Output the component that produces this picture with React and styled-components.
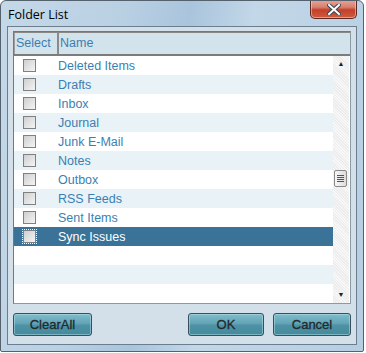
import React, { useState } from "react";
import styled, { createGlobalStyle } from "styled-components";

const folders = [
    "Deleted Items",
    "Drafts",
    "Inbox",
    "Journal",
    "Junk E-Mail",
    "Notes",
    "Outbox",
    "RSS Feeds",
    "Sent Items",
    "Sync Issues",
];

const GlobalStyle = createGlobalStyle`
    body {
        margin: 0;
        background: #fff;
        font-family: "Liberation Sans", Arial, sans-serif;
    }
`;

export default function App() {
    const [selected] = useState(9);
    const rows = [...folders, "", "", ""];
    return (
        <>
            <GlobalStyle />
            <Window>
                <TitleBar>
                    <Title>Folder List</Title>
                    <CloseButton>
                        <svg width="14" height="11" viewBox="0 0 14 11">
                            <path
                                d="M2 1 L12 10 M12 1 L2 10"
                                stroke="#3b4650"
                                strokeWidth="4"
                                strokeLinecap="square"
                            />
                            <path
                                d="M2 1 L12 10 M12 1 L2 10"
                                stroke="#fff"
                                strokeWidth="2"
                                strokeLinecap="square"
                            />
                        </svg>
                    </CloseButton>
                </TitleBar>
                <Client>
                    <ListBox>
                        <Header>
                            <HeadCell width="41px">Select</HeadCell>
                            <HeadCell>Name</HeadCell>
                        </Header>
                        <Body>
                            <Rows>
                                {rows.map((name, i) => (
                                    <Row
                                        key={i}
                                        $alt={i % 2 === 1}
                                        $selected={i === selected}
                                    >
                                        <CheckCell>
                                            {name && (
                                                <Check
                                                    $focus={i === selected}
                                                />
                                            )}
                                        </CheckCell>
                                        <NameCell $selected={i === selected}>
                                            {name}
                                        </NameCell>
                                    </Row>
                                ))}
                            </Rows>
                            <ScrollBar>
                                <Arrow>▲</Arrow>
                                <Track>
                                    <Thumb>
                                        <Grip />
                                        <Grip />
                                        <Grip />
                                        <Grip />
                                    </Thumb>
                                </Track>
                                <Arrow>▼</Arrow>
                            </ScrollBar>
                        </Body>
                    </ListBox>
                    <ButtonRow>
                        <Button width="79px">ClearAll</Button>
                        <Spacer />
                        <Button width="76px">OK</Button>
                        <Button width="78px">Cancel</Button>
                    </ButtonRow>
                </Client>
            </Window>
        </>
    );
}

const Window = styled.div`
    width: 364px;
    height: 352px;
    box-sizing: border-box;
    border: 1px solid #55616c;
    border-radius: 6px 6px 2px 2px;
    background: linear-gradient(
        100deg,
        #c4d8e8 0%,
        #b9d0e3 30%,
        #a9c4dc 45%,
        #c2d7e8 60%,
        #b7cee2 100%
    );
    display: flex;
    flex-direction: column;
    overflow: hidden;
`;

const TitleBar = styled.div`
    height: 27px;
    display: flex;
    align-items: flex-start;
    justify-content: space-between;
    padding-left: 7px;
    padding-right: 6px;
`;

const Title = styled.span`
    font-family: "Open Sans", "Liberation Sans", sans-serif;
    font-size: 12.5px;
    color: #000;
    margin-top: 5px;
`;

const CloseButton = styled.div`
    width: 45px;
    height: 18px;
    margin-top: -1px;
    border: 1px solid #5a2a24;
    border-top: none;
    border-radius: 0 0 5px 5px;
    background: linear-gradient(
        180deg,
        #e8a596 0%,
        #d7806e 40%,
        #c2412b 55%,
        #d25a3c 100%
    );
    display: flex;
    align-items: center;
    justify-content: center;
    box-shadow: inset 0 0 0 1px rgba(255, 220, 210, 0.5);
`;

const Client = styled.div`
    flex: 1;
    margin: 0 6px 6px 6px;
    border: 1px solid #6b7e8e;
    background: #d3e0e9;
    padding: 4px 5px 8px 5px;
    display: flex;
    flex-direction: column;
    gap: 9px;
`;

const ListBox = styled.div`
    height: 273px;
    box-sizing: border-box;
    border: 1px solid #8d9aa4;
    border-left-color: #6d7a84;
    border-top-color: #6d7a84;
    background: #fff;
    display: flex;
    flex-direction: column;
`;

const Header = styled.div`
    height: 21px;
    display: flex;
    background: #d3e3ec;
    border-top: 1px solid #888;
    border-bottom: 2px solid #7c7c7c;
`;

const HeadCell = styled.div`
    width: ${(p) => p.width || "auto"};
    flex: ${(p) => (p.width ? "none" : "1")};
    padding-left: 1px;
    font-size: 12.5px;
    line-height: 21px;
    color: #3b7fb2;
    border-right: ${(p) => (p.width ? "2px solid #8a8a8a" : "none")};
    border-left: ${(p) => (p.width ? "1px solid #a0a0a0" : "none")};
`;

const Body = styled.div`
    flex: 1;
    display: flex;
    overflow: hidden;
`;

const Rows = styled.div`
    flex: 1;
    display: flex;
    flex-direction: column;
`;

const Row = styled.div`
    height: 19px;
    flex: none;
    display: flex;
    align-items: center;
    background: ${(p) =>
        p.$selected ? "#3a7298" : p.$alt ? "#e8f2f7" : "#fff"};
`;

const CheckCell = styled.div`
    width: 35px;
    padding-left: 9px;
    display: flex;
    justify-content: flex-start;
`;

const Check = styled.div`
    width: 11px;
    height: 11px;
    border: 1px solid #808080;
    background: linear-gradient(135deg, #cfcfcf 0%, #f4f4f4 100%);
    outline: ${(p) => (p.$focus ? "1px dotted #fff" : "none")};
`;

const NameCell = styled.div`
    font-size: 12.5px;
    color: ${(p) => (p.$selected ? "#fff" : "#3b7fb2")};
`;

const ScrollBar = styled.div`
    width: 16px;
    margin-right: 1px;
    display: flex;
    flex-direction: column;
    background: repeating-linear-gradient(
        45deg,
        #ececec 0 1px,
        #f8f8f8 1px 2px
    );
`;

const Arrow = styled.div`
    height: 16px;
    font-size: 7px;
    line-height: 16px;
    text-align: center;
    color: #222;
`;

const Track = styled.div`
    flex: 1;
    padding-top: 98px;
`;

const Thumb = styled.div`
    width: 13px;
    height: 17px;
    margin-left: 1px;
    box-sizing: border-box;
    border: 1px solid #8a8a8a;
    border-radius: 2px;
    background: linear-gradient(90deg, #f7f7f7, #dcdcdc);
    display: flex;
    flex-direction: column;
    align-items: center;
    justify-content: center;
    gap: 1px;
`;

const Grip = styled.div`
    width: 7px;
    height: 1px;
    background: #555;
`;

const ButtonRow = styled.div`
    display: flex;
    gap: 9px;
`;

const Spacer = styled.div`
    flex: 1;
`;

const Button = styled.div`
    width: ${(p) => p.width};
    height: 23px;
    box-sizing: border-box;
    border: 1px solid #37505c;
    border-radius: 3px;
    background: linear-gradient(
        180deg,
        #80bccb 0%,
        #62a4b6 45%,
        #4d91a5 55%,
        #468a9d 100%
    );
    box-shadow: inset 0 0 0 1px rgba(190, 230, 240, 0.45);
    display: flex;
    align-items: center;
    justify-content: center;
    font-family: "Liberation Sans", Arial, sans-serif;
    font-size: 13px;
    color: #222a2e;
    -webkit-text-stroke: 0.3px #222a2e;
`;
